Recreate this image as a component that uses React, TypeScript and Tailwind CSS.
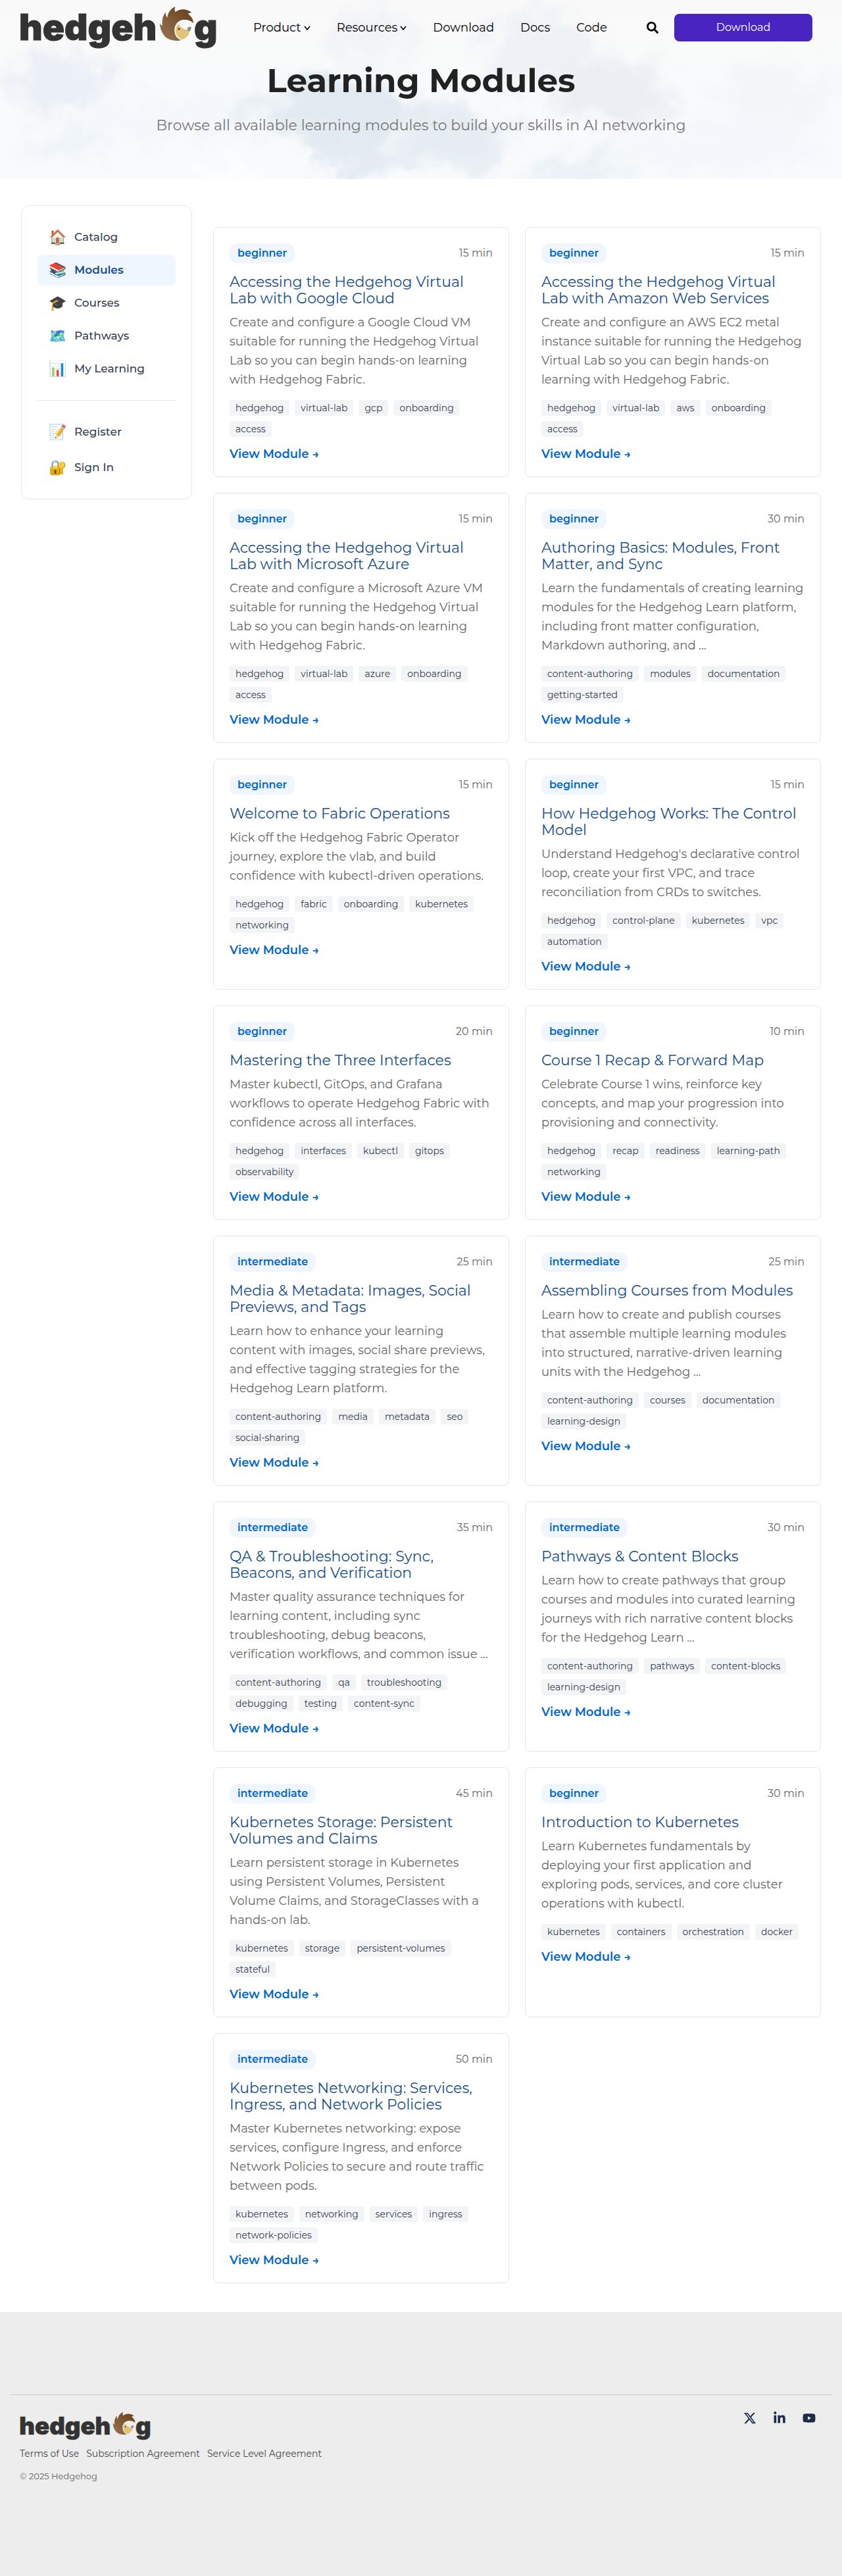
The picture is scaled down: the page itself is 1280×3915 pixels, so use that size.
import { useId } from "react";
import { FaLinkedinIn, FaSearch, FaYoutube } from "react-icons/fa";
import { FaXTwitter } from "react-icons/fa6";

type Module = {
  level: "beginner" | "intermediate";
  minutes: number;
  title: string;
  description: string;
  tags: string[];
};

const modules: Module[] = [
  {
    level: "beginner",
    minutes: 15,
    title: "Accessing the Hedgehog Virtual Lab with Google Cloud",
    description:
      "Create and configure a Google Cloud VM suitable for running the Hedgehog Virtual Lab so you can begin hands-on learning with Hedgehog Fabric.",
    tags: ["hedgehog", "virtual-lab", "gcp", "onboarding", "access"],
  },
  {
    level: "beginner",
    minutes: 15,
    title: "Accessing the Hedgehog Virtual Lab with Amazon Web Services",
    description:
      "Create and configure an AWS EC2 metal instance suitable for running the Hedgehog Virtual Lab so you can begin hands-on learning with Hedgehog Fabric.",
    tags: ["hedgehog", "virtual-lab", "aws", "onboarding", "access"],
  },
  {
    level: "beginner",
    minutes: 15,
    title: "Accessing the Hedgehog Virtual Lab with Microsoft Azure",
    description:
      "Create and configure a Microsoft Azure VM suitable for running the Hedgehog Virtual Lab so you can begin hands-on learning with Hedgehog Fabric.",
    tags: ["hedgehog", "virtual-lab", "azure", "onboarding", "access"],
  },
  {
    level: "beginner",
    minutes: 30,
    title: "Authoring Basics: Modules, Front Matter, and Sync",
    description:
      "Learn the fundamentals of creating learning modules for the Hedgehog Learn platform, including front matter configuration, Markdown authoring, and ...",
    tags: ["content-authoring", "modules", "documentation", "getting-started"],
  },
  {
    level: "beginner",
    minutes: 15,
    title: "Welcome to Fabric Operations",
    description:
      "Kick off the Hedgehog Fabric Operator journey, explore the vlab, and build confidence with kubectl-driven operations.",
    tags: ["hedgehog", "fabric", "onboarding", "kubernetes", "networking"],
  },
  {
    level: "beginner",
    minutes: 15,
    title: "How Hedgehog Works: The Control Model",
    description:
      "Understand Hedgehog's declarative control loop, create your first VPC, and trace reconciliation from CRDs to switches.",
    tags: ["hedgehog", "control-plane", "kubernetes", "vpc", "automation"],
  },
  {
    level: "beginner",
    minutes: 20,
    title: "Mastering the Three Interfaces",
    description:
      "Master kubectl, GitOps, and Grafana workflows to operate Hedgehog Fabric with confidence across all interfaces.",
    tags: ["hedgehog", "interfaces", "kubectl", "gitops", "observability"],
  },
  {
    level: "beginner",
    minutes: 10,
    title: "Course 1 Recap & Forward Map",
    description:
      "Celebrate Course 1 wins, reinforce key concepts, and map your progression into provisioning and connectivity.",
    tags: ["hedgehog", "recap", "readiness", "learning-path", "networking"],
  },
  {
    level: "intermediate",
    minutes: 25,
    title: "Media & Metadata: Images, Social Previews, and Tags",
    description:
      "Learn how to enhance your learning content with images, social share previews, and effective tagging strategies for the Hedgehog Learn platform.",
    tags: ["content-authoring", "media", "metadata", "seo", "social-sharing"],
  },
  {
    level: "intermediate",
    minutes: 25,
    title: "Assembling Courses from Modules",
    description:
      "Learn how to create and publish courses that assemble multiple learning modules into structured, narrative-driven learning units with the Hedgehog ...",
    tags: ["content-authoring", "courses", "documentation", "learning-design"],
  },
  {
    level: "intermediate",
    minutes: 35,
    title: "QA & Troubleshooting: Sync, Beacons, and Verification",
    description:
      "Master quality assurance techniques for learning content, including sync troubleshooting, debug beacons, verification workflows, and common issue ...",
    tags: ["content-authoring", "qa", "troubleshooting", "debugging", "testing", "content-sync"],
  },
  {
    level: "intermediate",
    minutes: 30,
    title: "Pathways & Content Blocks",
    description:
      "Learn how to create pathways that group courses and modules into curated learning journeys with rich narrative content blocks for the Hedgehog Learn ...",
    tags: ["content-authoring", "pathways", "content-blocks", "learning-design"],
  },
  {
    level: "intermediate",
    minutes: 45,
    title: "Kubernetes Storage: Persistent Volumes and Claims",
    description:
      "Learn persistent storage in Kubernetes using Persistent Volumes, Persistent Volume Claims, and StorageClasses with a hands-on lab.",
    tags: ["kubernetes", "storage", "persistent-volumes", "stateful"],
  },
  {
    level: "beginner",
    minutes: 30,
    title: "Introduction to Kubernetes",
    description:
      "Learn Kubernetes fundamentals by deploying your first application and exploring pods, services, and core cluster operations with kubectl.",
    tags: ["kubernetes", "containers", "orchestration", "docker"],
  },
  {
    level: "intermediate",
    minutes: 50,
    title: "Kubernetes Networking: Services, Ingress, and Network Policies",
    description:
      "Master Kubernetes networking: expose services, configure Ingress, and enforce Network Policies to secure and route traffic between pods.",
    tags: ["kubernetes", "networking", "services", "ingress", "network-policies"],
  },
];

const sections = [
  { icon: "🏠", label: "Catalog" },
  { icon: "📚", label: "Modules", active: true },
  { icon: "🎓", label: "Courses" },
  { icon: "🗺️", label: "Pathways" },
  { icon: "📊", label: "My Learning" },
];

const account = [
  { icon: "📝", label: "Register" },
  { icon: "🔐", label: "Sign In" },
];

function Logo({ className }: { className: string }) {
  const fur = useId();
  return (
    <svg viewBox="0 0 301 67" className={className} role="img" aria-label="hedgehog">
      <defs>
        <linearGradient id={fur} x1="0" y1="1" x2="1" y2="0">
          <stop offset="0.1" stopColor="#94714f" />
          <stop offset="0.8" stopColor="#6f4823" />
        </linearGradient>
      </defs>
      <g fill="#333" stroke="#333" strokeWidth="1" className="font-['Inter'] text-[55px] font-black">
        <text x="-1" y="52">hedgeh</text>
        <text x="265" y="52">g</text>
      </g>
      <g transform="translate(-10 -9) scale(0.3333)">
        <path
          fill={`url(#${fur})`}
          d="M740 30C735 40 736 48 740 55C760 38 792 38 814 57C808 59 802 60 797 62C812 74 822 88 822 105C808 92 790 88 772 91C748 96 735 116 736 140C737 162 748 177 767 183C738 190 704 184 687 160C676 144 670 128 669 107C673 112 677 115 681 116C677 94 682 72 696 55C695 66 698 74 703 80C706 56 720 38 740 30Z"
        />
        <path
          fill="#e2c275"
          d="M752 109C742 122 739 138 743 153C748 166 758 176 770 180C786 176 800 164 802 149C803 143 798 140 795 136C780 136 762 124 752 109Z"
        />
        <path fill="#8c8c8c" d="M794 128C799 123 806 121 812 124C812 132 808 141 803 145C797 141 794 134 794 128Z" />
        <circle cx="756" cy="132" r="5" fill="#6b4524" />
      </g>
    </svg>
  );
}

function Sky() {
  return (
    <svg
      aria-hidden="true"
      viewBox="0 0 1280 272"
      preserveAspectRatio="xMidYMid slice"
      className="absolute inset-0 h-full w-full"
    >
      <defs>
        <linearGradient id="sky-base" x1="0" y1="0" x2="0" y2="1">
          <stop offset="0" stopColor="#f9f9f9" />
          <stop offset="1" stopColor="#f8fafc" />
        </linearGradient>
        <filter id="sky-cloud" x="-20%" y="-40%" width="140%" height="180%" colorInterpolationFilters="sRGB">
          <feTurbulence type="fractalNoise" baseFrequency="0.02" numOctaves="5" seed="7" result="noise" />
          <feGaussianBlur in="SourceGraphic" stdDeviation="11" result="soft" />
          <feDisplacementMap in="soft" in2="noise" scale="90" xChannelSelector="R" yChannelSelector="G" />
        </filter>
      </defs>
      <rect width="1280" height="272" fill="url(#sky-base)" />
      <g filter="url(#sky-cloud)">
        <ellipse cx="90" cy="125" rx="75" ry="42" fill="#ebeff6" />
        <ellipse cx="110" cy="215" rx="60" ry="20" fill="#eef3f8" />
        <ellipse cx="300" cy="180" rx="160" ry="26" fill="#f3f6fb" />
        <ellipse cx="410" cy="160" rx="55" ry="26" fill="#ebf0f5" />
        <ellipse cx="520" cy="170" rx="100" ry="50" fill="#e0eaf0" />
        <ellipse cx="560" cy="235" rx="70" ry="38" fill="#e4ebf3" />
        <ellipse cx="690" cy="190" rx="110" ry="34" fill="#e5ecf2" />
        <ellipse cx="680" cy="240" rx="90" ry="24" fill="#e8eef5" />
        <ellipse cx="560" cy="60" rx="60" ry="40" fill="#f1f3f7" />
        <ellipse cx="820" cy="80" rx="80" ry="60" fill="#eef1f6" />
        <ellipse cx="930" cy="140" rx="90" ry="50" fill="#ebeff4" />
        <ellipse cx="880" cy="255" rx="70" ry="22" fill="#e9f1f6" />
        <ellipse cx="1180" cy="150" rx="80" ry="50" fill="#f4f5f8" />
        <ellipse cx="1100" cy="225" rx="160" ry="30" fill="#f3f7fb" />
        <ellipse cx="640" cy="262" rx="44" ry="14" fill="#fafcfd" />
        <ellipse cx="760" cy="175" rx="50" ry="12" fill="#f8fafc" />
        <ellipse cx="590" cy="210" rx="22" ry="10" fill="#f6f9fb" />
        <ellipse cx="340" cy="262" rx="60" ry="14" fill="#fcfdfe" />
      </g>
    </svg>
  );
}

function Chevron() {
  return (
    <svg viewBox="0 0 10 7" className="w-[10px]" fill="none" stroke="currentColor" strokeWidth="1.6" aria-hidden="true">
      <path d="M1 1l4 5 4-5" />
    </svg>
  );
}

function Header() {
  return (
    <header className="relative flex h-[84px] items-center pr-[45px] pl-[30px] text-black">
      <a href="#home" className="shrink-0">
        <Logo className="w-[301px] overflow-visible" />
      </a>
      <nav aria-label="Main" className="ml-[54px] flex items-center gap-10 text-lg">
        <button type="button" className="flex items-center gap-1">
          Product
          <Chevron />
        </button>
        <button type="button" className="flex items-center gap-1">
          Resources
          <Chevron />
        </button>
        <a href="#download">Download</a>
        <a href="#docs">Docs</a>
        <a href="#code">Code</a>
      </nav>
      <button type="button" aria-label="Search" className="mr-6 ml-auto text-lg">
        <FaSearch />
      </button>
      <a
        href="#download"
        className="flex h-[42px] w-[210px] items-center justify-center rounded-lg bg-[#4924c0] text-base text-white"
      >
        Download
      </a>
    </header>
  );
}

function SideLink({ icon, label, active }: { icon: string; label: string; active?: boolean }) {
  return (
    <li>
      <a
        href={`#${label}`}
        aria-current={active ? "page" : undefined}
        className={
          active
            ? "flex h-[47px] items-center gap-3 rounded-lg bg-[#eff6ff] px-4 text-[17px] font-semibold text-[#1a4e8a]"
            : "flex h-[47px] items-center gap-3 rounded-lg px-4 text-[17px] font-medium text-[#374151]"
        }
      >
        <span aria-hidden="true" className="flex w-7 justify-center text-[22px]">
          {icon}
        </span>
        {label}
      </a>
    </li>
  );
}

function Sidebar() {
  return (
    <aside className="w-[260px] shrink-0 self-start rounded-xl border border-[#e5e7eb] p-6">
      <ul className="flex flex-col gap-[3px]">
        {sections.map((s) => (
          <SideLink key={s.label} {...s} />
        ))}
      </ul>
      <hr className="my-6 border-[#e5e7eb]" />
      <ul className="flex flex-col gap-[7px]">
        {account.map((s) => (
          <SideLink key={s.label} {...s} />
        ))}
      </ul>
    </aside>
  );
}

function ModuleCard({ level, minutes, title, description, tags }: Module) {
  return (
    <article className="rounded-lg border border-[#e5e5e5] bg-white px-6 pt-6 pb-5">
      <div className="flex items-center justify-between text-base">
        <span className="rounded-xl bg-[#eff6ff] px-3 py-[3px] font-semibold text-[#0066cc]">{level}</span>
        <span className="text-[#666]">{minutes} min</span>
      </div>
      <h2 className="mt-4 text-[22px] leading-[25px] text-[#1a4e8a]">{title}</h2>
      <p className="mt-[10px] text-lg leading-[29px] text-[#666]">{description}</p>
      <ul className="mt-4 flex flex-wrap gap-2">
        {tags.map((tag) => (
          <li key={tag} className="rounded bg-[#f3f4f6] px-[9px] py-0.5 text-sm text-[#374151]">
            {tag}
          </li>
        ))}
      </ul>
      <a href="#module" className="mt-3 inline-block align-top text-lg font-semibold text-[#0066cc]">
        View Module →
      </a>
    </article>
  );
}

function Footer() {
  return (
    <footer className="grow bg-[#ededed] px-[15px] pt-[125px] pb-[143px]">
      <div className="flex justify-between border-t border-[#ccc] px-[15px] pt-[25px]">
        <div>
          <a href="#home" className="block w-[200px]">
            <Logo className="w-[200px] overflow-visible" />
          </a>
          <nav aria-label="Legal" className="mt-[9px] flex gap-[11px] text-sm text-[#494949]">
            <a href="#terms">Terms of Use</a>
            <a href="#subscription">Subscription Agreement</a>
            <a href="#sla">Service Level Agreement</a>
          </nav>
          <p className="mt-4 text-[13px] leading-4 text-[#666]">© 2025 Hedgehog</p>
        </div>
        <div className="flex gap-[25px] self-start pr-[10px] text-xl text-[#1a2e47]">
          <a href="#x" aria-label="X">
            <FaXTwitter />
          </a>
          <a href="#linkedin" aria-label="LinkedIn">
            <FaLinkedinIn />
          </a>
          <a href="#youtube" aria-label="YouTube">
            <FaYoutube />
          </a>
        </div>
      </div>
    </footer>
  );
}

export default function App() {
  return (
    <div className="flex min-h-screen flex-col bg-white font-['Montserrat','Inter',sans-serif]">
      <div className="relative overflow-hidden pb-[66px]">
        <Sky />
        <Header />
        <div className="relative px-8 text-center">
          <h1 className="mt-[11px] text-[50px] leading-[56px] font-bold text-[#222]">Learning Modules</h1>
          <p className="mt-[25px] text-[22px] leading-[30px] text-[#777]">
            Browse all available learning modules to build your skills in AI networking
          </p>
        </div>
      </div>
      <div className="flex gap-8 px-8 pt-10 pb-11">
        <Sidebar />
        <main className="grid min-w-0 grow grid-cols-2 gap-6 pt-[33px]">
          {modules.map((m) => (
            <ModuleCard key={m.title} {...m} />
          ))}
        </main>
      </div>
      <Footer />
    </div>
  );
}
